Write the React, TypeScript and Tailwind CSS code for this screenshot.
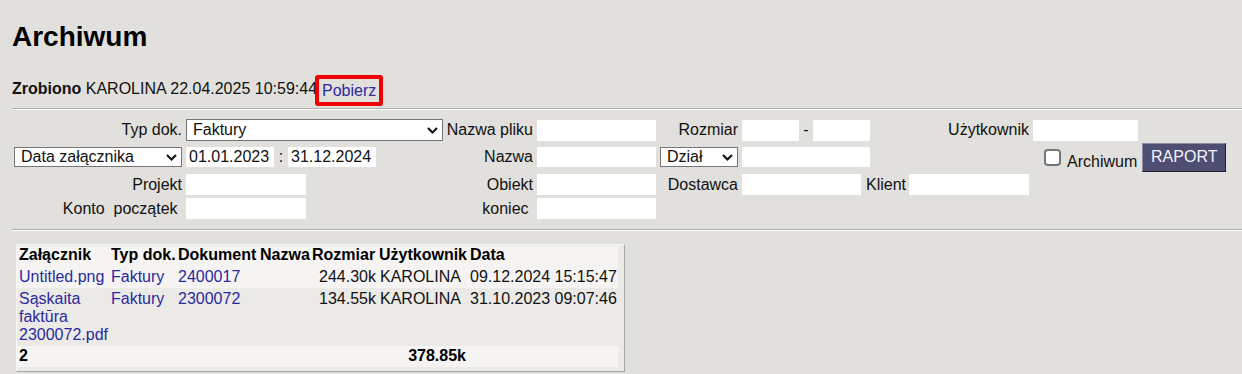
import React from "react";

const font = { fontFamily: '"Liberation Sans", Arial, sans-serif' };

function Chevron() {
  return (
    <svg width="11" height="7" viewBox="0 0 11 7" fill="none">
      <path d="M1 1l4.5 4.5L10 1" stroke="#111" strokeWidth="2" />
    </svg>
  );
}

function Select({ value, w, h = "h-[21px]" }: { value: string; w: string; h?: string }) {
  return (
    <div className={`${w} ${h} flex items-center justify-between bg-white border border-[#767676] pl-[6px] pr-[4px] shrink-0`}>
      <span className="leading-[18px]">{value}</span>
      <Chevron />
    </div>
  );
}

function Field({ w, value = "", h = "h-[21px]" }: { w: string; value?: string; h?: string }) {
  return (
    <input
      readOnly
      defaultValue={value}
      className={`${w} ${h} bg-white px-[3px] text-[16px] leading-[18px] outline-none shrink-0`}
    />
  );
}

function Label({ w, children }: { w: string; children: React.ReactNode }) {
  return <span className={`${w} shrink-0 text-right leading-[18px] whitespace-pre`}>{children}</span>;
}

const heads = ["Załącznik", "Typ dok.", "Dokument", "Nazwa", "Rozmiar", "Użytkownik", "Data"];
const colW = ["w-[92px]", "w-[67px]", "w-[82px]", "w-[52px]", "w-[66px]", "w-[92px]", "w-[150px]"];

const rows = [
  { file: "Untitled.png", typ: "Faktury", doc: "2400017", size: "244.30k", user: "KAROLINA", date: "09.12.2024 15:15:47" },
  { file: "Sąskaita faktūra 2300072.pdf", typ: "Faktury", doc: "2300072", size: "134.55k", user: "KAROLINA", date: "31.10.2023 09:07:46" },
];

export default function App() {
  return (
    <div style={font} className="min-h-[374px] bg-[#e1e0dc] pl-[12px] text-[16px] text-[#111] overflow-hidden">
      <h1 className="pt-[21px] text-[28px] leading-[32px] font-bold text-black">Archiwum</h1>

      <div className="mt-[22px] flex items-start h-[31px]">
        <span className="mt-[5px] leading-[18px] font-bold">Zrobiono</span>
        <span className="mt-[5px] leading-[18px] whitespace-pre"> KAROLINA 22.04.2025 10:59:44</span>
        <span className="ml-[-2px] h-[31px] flex items-center border-[4px] border-[#f00000] rounded-[3px] px-[3px]">
          <a className="text-[#2a2a9e] leading-[18px] pt-[1px]">Pobierz</a>
        </span>
      </div>

      <div className="mt-[2px] border-t border-t-[#aeaeac] border-b border-b-white" />

      {/* filters */}
      <div className="mt-[9px] flex items-center h-[22px]">
        <Label w="w-[170px]">Typ dok.</Label>
        <div className="ml-[4px]"><Select value="Faktury" w="w-[257px]" h="h-[22px]" /></div>
        <Label w="w-[90px]">Nazwa pliku</Label>
        <div className="ml-[4px]"><Field w="w-[119px]" /></div>
        <Label w="w-[82px]">Rozmiar</Label>
        <div className="ml-[4px]"><Field w="w-[57px]" /></div>
        <span className="w-[14px] text-center leading-[18px]">-</span>
        <Field w="w-[57px]" />
        <Label w="w-[159px]">Użytkownik</Label>
        <div className="ml-[4px]"><Field w="w-[105px]" /></div>
      </div>

      <div className="mt-[2px] flex items-center h-[28px]">
        <div className="ml-[2px]"><Select value="Data załącznika" w="w-[168px]" h="h-[20px]" /></div>
        <div className="ml-[4px]"><Field w="w-[88px]" h="h-[20px]" value="01.01.2023" /></div>
        <span className="w-[14px] text-center leading-[18px]">:</span>
        <Field w="w-[88px]" h="h-[20px]" value="31.12.2024" />
        <Label w="w-[157px]">Nazwa</Label>
        <div className="ml-[4px]"><Field w="w-[119px]" h="h-[20px]" /></div>
        <div className="ml-[4px]"><Select value="Dział" w="w-[78px]" h="h-[20px]" /></div>
        <div className="ml-[4px]"><Field w="w-[128px]" h="h-[20px]" /></div>
        <span className="ml-[174px] w-[17px] h-[17px] shrink-0 bg-white border-2 border-[#767676] rounded-[4px]" />
        <span className="ml-[6px] mt-[9px] leading-[18px]">Archiwum</span>
        <button className="ml-[5px] w-[84px] h-[29px] bg-[#4e4e72] text-[#f4f4ff] text-[16px] leading-[18px] border border-t-[#8a8aa8] border-l-[#8a8aa8] border-r-[#1c1c2c] border-b-[#1c1c2c]">
          RAPORT
        </button>
      </div>

      <div className="mt-[2px] flex items-center h-[23px]">
        <Label w="w-[170px]">Projekt</Label>
        <div className="ml-[4px]"><Field w="w-[120px]" /></div>
        <Label w="w-[227px]">Obiekt</Label>
        <div className="ml-[4px]"><Field w="w-[119px]" /></div>
        <Label w="w-[82px]">Dostawca</Label>
        <div className="ml-[4px]"><Field w="w-[119px]" /></div>
        <span className="ml-[5px] leading-[18px]">Klient</span>
        <div className="ml-[3px]"><Field w="w-[120px]" /></div>
      </div>

      <div className="mt-[1px] flex items-center h-[23px]">
        <Label w="w-[170px]">{"Konto  początek "}</Label>
        <div className="ml-[4px]"><Field w="w-[120px]" /></div>
        <Label w="w-[227px]">{"koniec "}</Label>
        <div className="ml-[4px]"><Field w="w-[119px]" /></div>
      </div>

      <div className="mt-[9px] border-t border-t-[#aeaeac] border-b border-b-white" />

      {/* results */}
      <div className="mt-[13px] ml-[4px] w-fit bg-[#ebeae6] border border-t-[#f8f8f6] border-l-[#f8f8f6] border-r-[#a8a8a6] border-b-[#a8a8a6] pt-[1px] pb-[4px] pr-[6px]">
        <table className="table-fixed leading-[18px]">
          <thead>
            <tr className="bg-[#f5f4f2]">
              {heads.map((h, i) => (
                <th key={h} className={`${colW[i]} pt-0 pb-[2px] text-left font-bold text-black whitespace-nowrap ${i === 5 ? "pl-[3px]" : "pl-[2px]"}`}>
                  {h}
                </th>
              ))}
            </tr>
          </thead>
          <tbody>
            {rows.map((r, idx) => (
              <tr key={r.doc} className={idx === 0 ? "bg-[#f5f4f2]" : "bg-[#ebeae6]"}>
                <td className={`pl-[2px] align-top ${idx === 0 ? "py-[2px]" : "pt-[2px] pb-[2px]"}`}>
                  <a className="text-[#2a2a9e]">{r.file}</a>
                </td>
                <td className="pl-[2px] pt-[2px] align-top"><a className="text-[#2a2a9e]">{r.typ}</a></td>
                <td className="pl-[2px] pt-[2px] align-top"><a className="text-[#2a2a9e]">{r.doc}</a></td>
                <td className="pl-[2px] pt-[2px] align-top" />
                <td className="pt-[2px] align-top text-right">{r.size}</td>
                <td className="pl-[4px] pt-[2px] align-top">{r.user}</td>
                <td className="pl-[2px] pt-[2px] align-top whitespace-nowrap">{r.date}</td>
              </tr>
            ))}
            <tr className="bg-[#f5f4f2] font-bold text-black">
              <td className="pl-[2px] pt-[1px] pb-[2px]">2</td>
              <td />
              <td />
              <td />
              <td />
              <td className="pr-[2px] pt-[1px] pb-[2px] text-right">378.85k</td>
              <td />
            </tr>
          </tbody>
        </table>
      </div>
    </div>
  );
}
